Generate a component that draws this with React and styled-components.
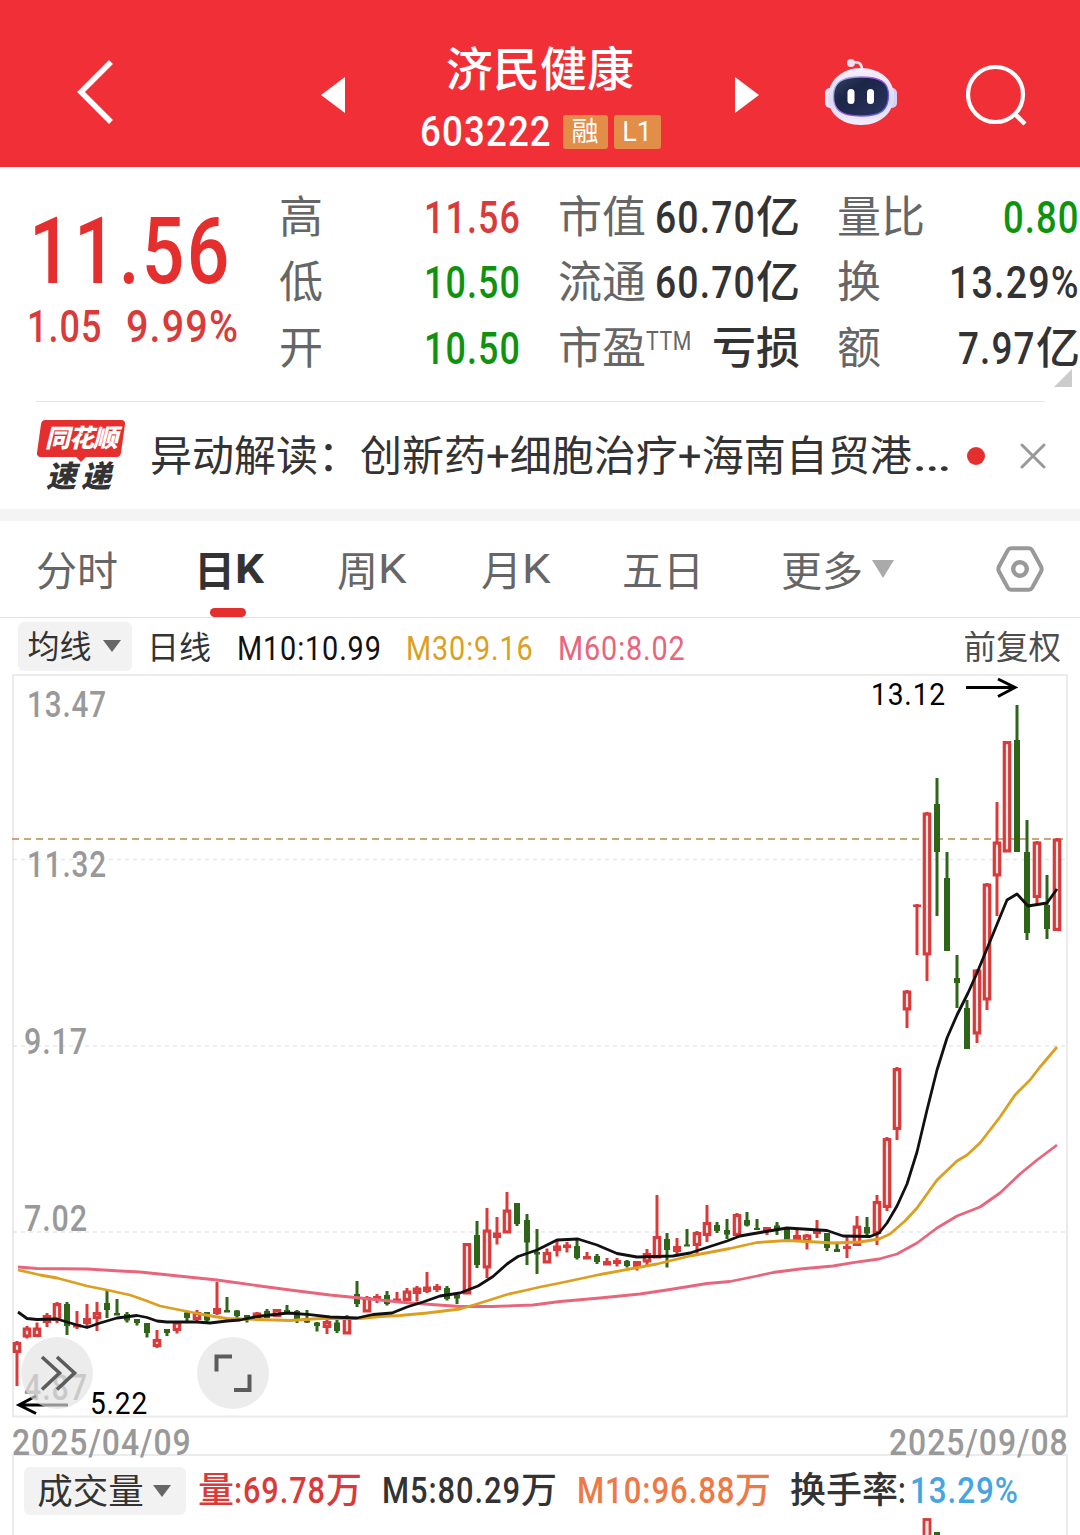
import React, { useLayoutEffect, useRef, useState } from "react";
import styled, { createGlobalStyle } from "styled-components";

const RED = "#d93a3a";
const GREEN = "#2f6518";

const stats = [
  { label: "高", value: "11.56", color: "#d93a3a", w: 97 },
  { label: "市值", value: "60.70", unit: "亿", w: 101 },
  { label: "量比", value: "0.80", color: "#0f930f", w: 77 },
  { label: "低", value: "10.50", color: "#0f930f", w: 97 },
  { label: "流通", value: "60.70", unit: "亿", w: 101 },
  { label: "换", value: "13.29%", w: 131 },
  { label: "开", value: "10.50", color: "#0f930f", w: 97 },
  { label: "市盈", sup: "TTM", unit: "亏损" },
  { label: "额", value: "7.97", unit: "亿", w: 78 },
];

const tabs = [
  { label: "分时", left: 36 },
  { label: "日", latin: "K", left: 76, active: true },
  { label: "周", latin: "K", left: 72 },
  { label: "月", latin: "K", left: 73 },
  { label: "五日", left: 70 },
  { label: "更多", left: 77, arrow: true },
];

// [up, bodyTop, bodyBottom, high, low]
const candles = [
  [1, 1342, 1353, 1341, 1386],
  [1, 1327.5, 1337.5, 1326, 1338.5],
  [1, 1327.5, 1337, 1322.5, 1337],
  [1, 1315, 1323, 1313, 1327],
  [1, 1303, 1321, 1302, 1323],
  [0, 1304, 1326, 1302, 1335],
  [1, 1324, 1327.5, 1311, 1329],
  [1, 1318, 1324, 1304, 1328],
  [1, 1312, 1319, 1302, 1331],
  [0, 1303, 1310, 1290, 1318],
  [0, 1313, 1315.5, 1299, 1315.5],
  [0, 1314, 1320.5, 1312, 1322.5],
  [0, 1319, 1323, 1319, 1325.5],
  [0, 1323, 1333, 1323, 1337.5],
  [1, 1339, 1347, 1330, 1348],
  [0, 1329, 1333, 1329, 1336],
  [1, 1321.5, 1331, 1321, 1333.5],
  [0, 1312.5, 1318, 1312, 1322],
  [1, 1312, 1320, 1310, 1321],
  [0, 1312, 1320.5, 1312, 1322],
  [1, 1308, 1314, 1282, 1315],
  [0, 1310, 1312.5, 1297, 1312.5],
  [0, 1310.5, 1316, 1310, 1318],
  [0, 1315, 1320, 1315, 1322.5],
  [1, 1312.5, 1319.5, 1312, 1321],
  [0, 1311, 1318, 1309, 1318],
  [1, 1309, 1317, 1309, 1317],
  [0, 1310, 1313, 1305, 1314],
  [0, 1311, 1321, 1310, 1323],
  [0, 1320.5, 1322.5, 1310, 1323],
  [0, 1322.5, 1326, 1322, 1331.5],
  [1, 1321, 1328, 1320, 1334],
  [0, 1322.5, 1331, 1320, 1333],
  [1, 1317, 1334.5, 1315, 1334.5],
  [0, 1294, 1304, 1281, 1307],
  [1, 1297, 1312.5, 1296, 1312.5],
  [1, 1296, 1300, 1294, 1303],
  [0, 1295, 1304, 1291, 1305.5],
  [1, 1298.5, 1302, 1292, 1302],
  [1, 1290.5, 1301, 1288, 1301],
  [1, 1287.5, 1294, 1286, 1301.5],
  [1, 1286.5, 1292, 1272, 1293],
  [1, 1286, 1290, 1284, 1292],
  [0, 1288, 1299, 1286, 1300.5],
  [0, 1295, 1298.5, 1295, 1304],
  [1, 1243, 1294.5, 1243, 1294.5],
  [0, 1235, 1265, 1221, 1268],
  [1, 1229.5, 1268.5, 1208, 1278],
  [1, 1232.5, 1238, 1217, 1244.5],
  [1, 1209.5, 1233.5, 1192, 1233.5],
  [0, 1203, 1224, 1203, 1226],
  [0, 1220, 1242.5, 1214, 1265],
  [0, 1252, 1254.5, 1229, 1274],
  [1, 1252, 1263.5, 1248.5, 1263.5],
  [1, 1245.5, 1251, 1240, 1256.5],
  [1, 1244.5, 1248, 1242, 1252.5],
  [0, 1246, 1258, 1238, 1259.5],
  [1, 1256, 1259.5, 1252, 1259.5],
  [0, 1256, 1262, 1254, 1264],
  [1, 1261, 1265.5, 1258, 1265.5],
  [1, 1260, 1264, 1258, 1266.5],
  [0, 1261, 1266, 1260, 1267.5],
  [1, 1261, 1267, 1261, 1270.5],
  [1, 1253, 1262.5, 1249, 1265],
  [1, 1236, 1258.5, 1195, 1258.5],
  [0, 1239, 1250, 1233, 1267.5],
  [1, 1246, 1252, 1238, 1254],
  [0, 1244.5, 1246.5, 1229, 1246.5],
  [1, 1232, 1246, 1231, 1254],
  [1, 1222, 1236, 1205, 1242],
  [0, 1225, 1231, 1222, 1233],
  [0, 1230, 1234.5, 1219, 1239],
  [1, 1214, 1236, 1213, 1236],
  [0, 1220, 1225.5, 1212, 1226.5],
  [0, 1228, 1230, 1219, 1230],
  [1, 1227, 1231, 1227, 1235],
  [0, 1225.5, 1230, 1222, 1235],
  [0, 1229, 1240, 1229, 1240],
  [1, 1235, 1240, 1228, 1240],
  [1, 1234.5, 1242, 1234, 1249.5],
  [1, 1229.5, 1234, 1220, 1238],
  [0, 1233, 1248, 1233, 1251],
  [0, 1249, 1252, 1244, 1252],
  [1, 1246, 1249, 1237, 1258],
  [1, 1225.5, 1246, 1216, 1246],
  [0, 1227, 1233.5, 1217, 1235],
  [1, 1201, 1234, 1195, 1245],
  [1, 1138, 1208, 1137, 1211],
  [1, 1068, 1130, 1067, 1140],
  [1, 990.5, 1010.5, 990, 1028],
  [1, 904.5, 907, 904, 955],
  [1, 812.5, 955.5, 812, 981],
  [0, 804, 852, 778, 916],
  [0, 878, 951, 852, 951],
  [0, 978, 983, 955, 1008],
  [0, 1008, 1049, 1000, 1049],
  [1, 969.5, 1034.5, 969, 1043],
  [1, 883.5, 1000.5, 883, 1010],
  [1, 841.5, 876.5, 802, 916],
  [1, 741, 852.5, 741, 852],
  [0, 740, 852, 705, 852],
  [0, 852, 933, 820, 940],
  [1, 841.5, 898, 841, 906],
  [0, 905, 929, 875, 939],
  [1, 838.5, 931, 838, 931],
];

const ma10 =
  "18,1312 27,1318.5 37,1319.5 57,1319 77,1325 87,1327.5 100,1323 117,1318 137,1315.5 147,1317.5 157,1321 167,1322 197,1322 210,1323 227,1321 240,1320 257,1316.5 288,1313 310,1314.7 330,1317 357,1318 373,1314.5 392,1313 407,1307 423,1302 440,1296 460,1293 478,1286 493,1276.5 507,1264 518,1256.5 537,1250 557,1240 578,1239 597,1245 617,1253.5 637,1257 673,1256 690,1253 710,1246.5 727,1241 740,1236 763,1232 787,1228 803,1229 827,1230.5 843,1236 870,1236.5 879,1233 887,1223 897,1206 907,1184 917,1152 927,1110 937,1070 947,1038 957,1015 968,993 977,973 1007,900 1017,894 1028,906 1047,903 1057,889";
const ma30 =
  "18,1270 40,1275 57,1278 87,1286 107,1290 130,1295 147,1301 160,1306 180,1310 200,1314 217,1317 227,1318.5 257,1319.5 290,1320.5 320,1318.5 360,1318.5 380,1316.5 400,1315.5 427,1313 460,1309 477,1304 493,1299 507,1294.5 527,1290 540,1287 560,1283 600,1274.5 657,1264 690,1256 730,1248.5 757,1242.5 787,1240.5 807,1241.5 833,1243 860,1242 879,1239 890,1234 905,1221 917,1208 937,1180 957,1161 967,1155 980,1143 1000,1117 1015,1095 1030,1080 1040,1067 1057,1047";
const ma60 =
  "18,1267 37,1268.5 87,1269 120,1271 140,1272 217,1280 260,1286 290,1290 330,1295 360,1298 410,1303 460,1306.5 492,1306.5 533,1305 560,1301.5 600,1298 640,1294 670,1289.5 707,1283.5 730,1281.5 757,1276 773,1272.5 800,1269 833,1266 853,1262.7 879,1259 897,1254 917,1243 937,1228 957,1216 980,1207 1000,1193 1020,1174 1037,1160 1057,1145";

const axisLabels = [
  { text: "13.47", x: 27, y: 717, w: 80 },
  { text: "11.32", x: 27, y: 877, w: 80 },
  { text: "9.17", x: 24, y: 1054, w: 64 },
  { text: "7.02", x: 24, y: 1231, w: 64 },
  { text: "4.87", x: 24, y: 1400, w: 64 },
];

// squeezes or stretches a run of text to the given width
const Fit = ({ w, children, ...rest }) => {
  const ref = useRef();
  const [scale, setScale] = useState(1);
  useLayoutEffect(() => {
    if (ref.current?.offsetWidth) {
      setScale(w / ref.current.offsetWidth);
    }
  }, [w, children]);
  return (
    <FitBox $w={w} {...rest}>
      <FitText ref={ref} style={{ transform: `scaleX(${scale})` }}>
        {children}
      </FitText>
    </FitBox>
  );
};

const Robot = () => (
  <svg width="72" height="68" viewBox="0 0 72 68">
    <defs>
      <linearGradient id="shell" x1="0" y1="0" x2="0" y2="1">
        <stop offset="0" stopColor="#f8effa" />
        <stop offset="0.6" stopColor="#dcd9f8" />
        <stop offset="1" stopColor="#f3eefc" />
      </linearGradient>
      <linearGradient id="face" x1="0" y1="0" x2="1" y2="1">
        <stop offset="0" stopColor="#33425f" />
        <stop offset="0.35" stopColor="#1b2547" />
        <stop offset="1" stopColor="#2c3560" />
      </linearGradient>
      <linearGradient id="rim" x1="0" y1="0" x2="1" y2="0.6">
        <stop offset="0" stopColor="#a9c8f5" />
        <stop offset="0.6" stopColor="#a44be0" />
        <stop offset="1" stopColor="#5e5fe8" />
      </linearGradient>
    </defs>
    <path d="M27 5c6-2 10 0 10 7" fill="none" stroke="#f3e6f4" strokeWidth="2.6" />
    <circle cx="26" cy="5" r="4" fill="#f0dff0" />
    <rect x="0" y="30" width="10" height="20" rx="5" fill="#eae6fb" />
    <rect x="62" y="30" width="10" height="20" rx="5" fill="#d5d1f7" />
    <path
      d="M36 10C55 10 69 22 69 38S56 67 36 67 3 55 3 39 17 10 36 10Z"
      fill="url(#shell)"
    />
    <path
      d="M36 19C55 19 63.5 24 63.5 37C63.5 52 56 58 36 58S8.5 52 8.5 38C8.5 24 17 19 36 19Z"
      fill="url(#face)"
      stroke="url(#rim)"
      strokeWidth="1.3"
    />
    <rect x="22.5" y="31" width="7" height="15" rx="3.5" fill="#fff" />
    <rect x="42" y="31" width="7" height="15" rx="3.5" fill="#fff" />
  </svg>
);

const KLine = () => (
  <ChartSvg viewBox="0 674 1080 744" width="1080" height="744">
    <rect x="13" y="675" width="1054" height="741.5" fill="none" stroke="#ebebeb" strokeWidth="2" />
    {[859.5, 1046, 1232].map((y) => (
      <line key={y} x1="13" x2="1067" y1={y} y2={y} stroke="#e8e8e8" strokeWidth="1.6" strokeDasharray="4 4" />
    ))}
    <line x1="12" x2="1066" y1="839" y2="839" stroke="#c9a878" strokeWidth="2" strokeDasharray="7 5" />
    {axisLabels.map((l) => (
      <AxisText key={l.text} x={l.x} y={l.y} textLength={l.w} lengthAdjust="spacingAndGlyphs">
        {l.text}
      </AxisText>
    ))}
    {candles.map(([up, top, bottom, high, low], i) => {
      const x = 17 + i * 10;
      const h = bottom - top;
      return (
        <g key={i} stroke={up ? RED : GREEN} fill={up ? RED : GREEN}>
          {high < top && <line x1={x} x2={x} y1={high} y2={top + 1} strokeWidth="3" />}
          {low > bottom && <line x1={x} x2={x} y1={bottom - 1} y2={low} strokeWidth="3" />}
          {up && h > 6 ? (
            <rect x={x - 2.7} y={top + 1.6} width="5.4" height={h - 3.2} fill="#ffe4e4" strokeWidth="3.2" />
          ) : (
            <rect x={x - (up ? 4 : 3)} y={top} width={up ? 8 : 6} height={h} stroke="none" />
          )}
        </g>
      );
    })}
    <MaLine points={ma60} stroke="#e8657c" />
    <MaLine points={ma30} stroke="#dd9f1f" />
    <MaLine points={ma10} stroke="#111" />
    <NoteText x="871" y="705" textLength="75" lengthAdjust="spacingAndGlyphs">
      13.12
    </NoteText>
    <path d="M966 687.5H1014M998 679L1015 687.5L998 696.5" fill="none" stroke="#000" strokeWidth="3" />
    <NoteText x="90" y="1414" textLength="58" lengthAdjust="spacingAndGlyphs">
      5.22
    </NoteText>
    <path d="M68 1405H20M36 1396L19 1405L36 1413.5" fill="none" stroke="#000" strokeWidth="3" />
  </ChartSvg>
);

const App = () => {
  return (
    <Page>
      <GlobalStyle />
      <Header>
        <BackIcon width="38" height="66" viewBox="0 0 38 66">
          <path d="M34 3L4 33L34 63" fill="none" stroke="#fff" strokeWidth="5.5" />
        </BackIcon>
        <Triangle $ml={206} $flip width="24" height="36" viewBox="0 0 24 36">
          <path d="M0 0L24 18L0 36Z" fill="#fff" />
        </Triangle>
        <TitleBlock>
          <StockName>济民健康</StockName>
          <CodeRow>
            <Fit w={132}>603222</Fit>
            <Tag $w={45}>融</Tag>
            <Tag $w={47}>L1</Tag>
          </CodeRow>
        </TitleBlock>
        <Triangle width="24" height="36" viewBox="0 0 24 36">
          <path d="M0 0L24 18L0 36Z" fill="#fff" />
        </Triangle>
        <RobotWrap>
          <Robot />
        </RobotWrap>
        <svg width="62" height="62" viewBox="0 0 62 62">
          <circle cx="29.5" cy="30.5" r="27.5" fill="none" stroke="#fff" strokeWidth="4.2" />
          <path d="M48 49L59 60" stroke="#fff" strokeWidth="4.5" />
        </svg>
      </Header>

      <Quote>
        <PriceBox>
          <Price>
            <Fit w={203}>11.56</Fit>
          </Price>
          <Change>
            <Fit w={76}>1.05</Fit>
            <Fit w={113}>9.99%</Fit>
          </Change>
        </PriceBox>
        <StatGrid>
          {stats.map((s) => (
            <Stat key={s.label}>
              <StatLabel>
                {s.label}
                {s.sup && (
                  <Sup>
                    <Fit w={46}>{s.sup}</Fit>
                  </Sup>
                )}
              </StatLabel>
              <StatValue $color={s.color}>
                {s.value && <Fit w={s.w}>{s.value}</Fit>}
                {s.unit}
              </StatValue>
            </Stat>
          ))}
        </StatGrid>
        <Corner />
      </Quote>

      <News>
        <Logo>
          <LogoTop>同花顺</LogoTop>
          <LogoBottom>速递</LogoBottom>
        </Logo>
        <NewsText>
          异动解读：创新药+细胞治疗+海南自贸港
          <Fit w={41}>…</Fit>
        </NewsText>
        <Dot />
        <svg width="26" height="26" viewBox="0 0 26 26">
          <path d="M2 2L24 24M24 2L2 24" stroke="#999" strokeWidth="3" strokeLinecap="round" />
        </svg>
      </News>

      <Tabs>
        {tabs.map((t) => (
          <Tab key={t.label} $left={t.left} $active={t.active}>
            <TabLabel>{t.label}</TabLabel>
            {t.latin && <Fit w={30}>{t.latin}</Fit>}
            {t.arrow && <DownArrow $size={11} $h={18} $color="#aaa" $ml={9} />}
          </Tab>
        ))}
        <Settings width="48" height="46" viewBox="0 0 48 46">
          <path
            d="M15 2.2H33Q35 2.2 36.2 4.2L45 20.5Q46.3 23 45 25.5L36.2 41.8Q35 43.8 33 43.8H15Q13 43.8 11.8 41.8L3 25.5Q1.7 23 3 20.5L11.8 4.2Q13 2.2 15 2.2Z"
            fill="none"
            stroke="#999"
            strokeWidth="4"
          />
          <circle cx="24" cy="23" r="6.8" fill="none" stroke="#999" strokeWidth="4.4" />
        </Settings>
      </Tabs>

      <MaBar>
        <Picker $w={114} $h={49} $size={32}>
          <PickerLabel>均线</PickerLabel>
          <DownArrow $size={9} $h={12} $color="#666" $ml={11} />
        </Picker>
        <MaItem $ml={15} $color="#333" $size={32}>
          日线
        </MaItem>
        <MaItem $ml={26} $color="#111">
          <Fit w={145}>M10:10.99</Fit>
        </MaItem>
        <MaItem $ml={24} $color="#dd9f1f">
          <Fit w={128}>M30:9.16</Fit>
        </MaItem>
        <MaItem $ml={24} $color="#e8657c">
          <Fit w={128}>M60:8.02</Fit>
        </MaItem>
        <Adjust>前复权</Adjust>
      </MaBar>

      <ChartBox>
        <KLine />
        <RoundButton $left={21}>
          <svg width="72" height="72" viewBox="0 0 72 72">
            <path d="M21 20L38.5 36L21 52.5M36 20L53.5 36L36 52.5" fill="none" stroke="#5c5c5c" strokeWidth="3.6" />
          </svg>
        </RoundButton>
        <RoundButton $left={197}>
          <svg width="72" height="72" viewBox="0 0 72 72">
            <path d="M19.5 34.5V19.5H35M52.5 37.5V53H37" fill="none" stroke="#5c5c5c" strokeWidth="4" />
          </svg>
        </RoundButton>
      </ChartBox>

      <Dates>
        <Fit w={180}>2025/04/09</Fit>
        <Fit w={180}>2025/09/08</Fit>
      </Dates>

      <Volume>
        <VolumeBar>
          <Picker $w={162} $h={48} $size={35.5}>
            <PickerLabel>成交量</PickerLabel>
            <DownArrow $size={9} $h={12} $color="#666" $ml={9} />
          </Picker>
          <VolItem $ml={12} $color={RED}>
            量<Fit w={92}>:69.78</Fit>万
          </VolItem>
          <VolItem $ml={20} $color="#333">
            <Fit w={139}>M5:80.29</Fit>万
          </VolItem>
          <VolItem $ml={20} $color="#ed7a45">
            <Fit w={158}>M10:96.88</Fit>万
          </VolItem>
          <VolItem $ml={19} $color="#333">
            换手率<Fit w={9}>:</Fit>
          </VolItem>
          <VolItem $ml={3} $color="#45a5e3">
            <Fit w={109}>13.29%</Fit>
          </VolItem>
        </VolumeBar>
        <svg width="1050" height="20" viewBox="14 1515 1050 20">
          <rect x="924" y="1519.5" width="6" height="24" fill="#ffe4e4" stroke={RED} strokeWidth="2.8" />
          <rect x="934" y="1532" width="6" height="10" fill={GREEN} />
        </svg>
      </Volume>
    </Page>
  );
};

export default App;

const GlobalStyle = createGlobalStyle`
  * {
    box-sizing: border-box;
  }
  body {
    margin: 0;
    background: #fff;
  }
  svg {
    display: block;
    flex-shrink: 0;
  }
`;

const Page = styled.div`
  width: 1080px;
  height: 1535px;
  overflow: hidden;
  display: flex;
  flex-direction: column;
  background: #fff;
  color: #333;
  font-family: Roboto, "Noto Sans CJK SC", sans-serif;
  white-space: nowrap;
`;

const FitBox = styled.span`
  display: inline-block;
  width: ${({ $w }) => $w}px;
  flex-shrink: 0;
`;

const FitText = styled.span`
  display: inline-block;
  letter-spacing: 0.03em;
  transform-origin: left center;
`;

const Header = styled.header`
  flex: 0 0 167px;
  display: flex;
  align-items: center;
  padding: 22px 0 0 77px;
  background: #f12f37;
  color: #fff;
`;

const BackIcon = styled.svg`
  margin-bottom: 5px;
`;

const Triangle = styled.svg`
  margin-left: ${({ $ml }) => $ml || 0}px;
  transform: ${({ $flip }) => ($flip ? "scaleX(-1)" : "none")};
`;

const TitleBlock = styled.div`
  width: 390px;
  padding-top: 8px;
  display: flex;
  flex-direction: column;
  align-items: center;
  gap: 10px;
`;

const StockName = styled.h1`
  margin: 0;
  font-size: 47px;
  line-height: 56px;
  font-weight: 500;
`;

const CodeRow = styled.div`
  display: flex;
  align-items: center;
  font-size: 42px;
  line-height: 48px;
  font-weight: 500;

  & > :first-child {
    margin-right: 11px;
  }
`;

const Tag = styled.span`
  width: ${({ $w }) => $w}px;
  height: 34px;
  margin-right: 6px;
  border-radius: 3px;
  background: #e28e48;
  font-size: 27px;
  line-height: 34px;
  font-weight: 400;
  text-align: center;

  &:last-child {
    margin-right: 0;
  }
`;

const RobotWrap = styled.div`
  margin: 0 69px 6px 66px;
`;

const Quote = styled.section`
  position: relative;
  flex: 0 0 234px;
  display: flex;
`;

const PriceBox = styled.div`
  width: 280px;
  padding: 37px 0 0 27px;
  color: #d93a3a;
`;

const Price = styled.div`
  padding-left: 2px;
  font-size: 92px;
  line-height: 96px;
  font-weight: 500;
  color: #e52f2f;
`;

const Change = styled.div`
  display: flex;
  gap: 23px;
  font-size: 44px;
  line-height: 55px;
  font-weight: 500;
`;

const StatGrid = styled.div`
  display: grid;
  grid-template-columns: 242px 242px 243px;
  column-gap: 37px;
  grid-auto-rows: 65.5px;
  padding-top: 18px;
`;

const Stat = styled.div`
  display: flex;
  justify-content: space-between;
  align-items: center;
  line-height: 60px;
`;

const StatLabel = styled.span`
  display: flex;
  font-size: 44px;
  color: #666;
`;

const Sup = styled.span`
  font-size: 25px;
  line-height: 46px;
`;

const StatValue = styled.span`
  font-size: 44px;
  font-weight: 500;
  color: ${({ $color }) => $color || "#333"};
`;

const Corner = styled.i`
  position: absolute;
  right: 8px;
  bottom: 14px;
  border-left: 18px solid transparent;
  border-bottom: 18px solid #ccc;
`;

const News = styled.section`
  flex: 0 0 108px;
  display: flex;
  align-items: center;
  margin: 0 35px 0 36px;
  border-top: 1px solid #e6e6e6;
`;

const Logo = styled.div`
  flex: 0 0 90px;
  margin-right: 24px;
  display: flex;
  flex-direction: column;
  align-items: center;
  font-style: italic;
  font-weight: 900;
`;

const LogoTop = styled.div`
  position: relative;
  z-index: 0;
  width: 88px;
  height: 37px;
  line-height: 37px;
  font-size: 25px;
  letter-spacing: -1px;
  text-align: center;
  color: #fff;

  &::before {
    content: "";
    position: absolute;
    inset: 0 2px;
    z-index: -1;
    border-radius: 4px;
    background: #e52f2f;
    transform: skewX(-8deg);
  }

  &::after {
    content: "";
    position: absolute;
    left: 38px;
    top: 36px;
    border: 6px solid transparent;
    border-top-color: #e52f2f;
    border-bottom: 0;
  }
`;

const LogoBottom = styled.div`
  height: 35px;
  line-height: 40px;
  font-size: 30px;
  letter-spacing: 5px;
`;

const NewsText = styled.div`
  flex: 0 0 802px;
  padding-top: 3px;
  font-size: 42px;
  line-height: 60px;
`;

const Dot = styled.i`
  width: 18px;
  height: 18px;
  margin: 0 35px 0 14px;
  flex-shrink: 0;
  border-radius: 50%;
  background: #e52f2f;
`;

const Tabs = styled.nav`
  flex: 0 0 109px;
  display: flex;
  align-items: center;
  border-top: 12px solid #f4f4f4;
  border-bottom: 1px solid #e2e2e2;
`;

const Tab = styled.div`
  position: relative;
  display: flex;
  align-items: center;
  margin-left: ${({ $left }) => $left}px;
  height: 96px;
  font-size: 41px;
  font-weight: ${({ $active }) => ($active ? 700 : 400)};
  color: ${({ $active }) => ($active ? "#333" : "#666")};

  &::after {
    content: "";
    display: ${({ $active }) => ($active ? "block" : "none")};
    position: absolute;
    left: 16px;
    bottom: 0;
    width: 36px;
    height: 9px;
    border-radius: 5px;
    background: #e52f2f;
  }
`;

const TabLabel = styled.span`
  padding-bottom: 3px;
`;

const DownArrow = styled.i`
  margin-left: ${({ $ml }) => $ml}px;
  border: ${({ $size }) => $size}px solid transparent;
  border-top: ${({ $h }) => $h}px solid ${({ $color }) => $color};
  border-bottom: 0;
`;

const Settings = styled.svg`
  margin-left: auto;
  margin-right: 36px;
`;

const MaBar = styled.div`
  flex: 0 0 56px;
  display: flex;
  align-items: center;
  padding: 0 19px 0 18px;
  font-size: 32px;
  line-height: 44px;
`;

const Picker = styled.div`
  display: flex;
  align-items: center;
  justify-content: center;
  flex-shrink: 0;
  width: ${({ $w }) => $w}px;
  height: ${({ $h }) => $h}px;
  padding-right: 2px;
  border-radius: 6px;
  background: #f2f2f2;
  font-size: ${({ $size }) => $size}px;
  color: #333;
`;

const PickerLabel = styled.span`
  padding-top: 2px;
  line-height: 40px;
`;

const MaItem = styled.span`
  margin-left: ${({ $ml }) => $ml}px;
  padding-top: 4px;
  color: ${({ $color }) => $color};
  font-size: ${({ $size }) => $size || 34}px;
`;

const Adjust = styled.span`
  margin-left: auto;
  padding-top: 4px;
  font-size: 32.5px;
  color: #4d4d4d;
`;

const ChartBox = styled.div`
  position: relative;
  flex: 0 0 744px;
`;

const ChartSvg = styled.svg`
  overflow: visible;
  font-family: Roboto, sans-serif;
`;

const AxisText = styled.text`
  font-size: 36px;
  font-weight: 500;
  letter-spacing: 0.03em;
  fill: #999;
`;

const NoteText = styled.text`
  font-size: 31px;
  letter-spacing: 0.03em;
  fill: #000;
`;

const MaLine = styled.polyline`
  fill: none;
  stroke-width: 2.8;
  stroke-linejoin: round;
`;

const RoundButton = styled.div`
  position: absolute;
  left: ${({ $left }) => $left}px;
  top: 663px;
  width: 72px;
  height: 72px;
  border-radius: 50%;
  background: rgba(226, 226, 226, 0.66);
`;

const Dates = styled.div`
  flex: 0 0 36px;
  min-height: 0;
  display: flex;
  justify-content: space-between;
  padding: 4px 11px 0 12px;
  font-size: 36px;
  line-height: 42px;
  font-weight: 500;
  color: #999;
`;

const Volume = styled.section`
  flex: 0 0 81px;
  margin: 0 12px;
  border: 2px solid #ebebeb;
  border-bottom: 0;
`;

const VolumeBar = styled.div`
  display: flex;
  align-items: center;
  height: 59px;
  padding: 10px 0 0 10px;
`;

const VolItem = styled.span`
  margin-left: ${({ $ml }) => $ml}px;
  padding-top: 1px;
  font-size: 36px;
  line-height: 48px;
  font-weight: 500;
  color: ${({ $color }) => $color};
`;
